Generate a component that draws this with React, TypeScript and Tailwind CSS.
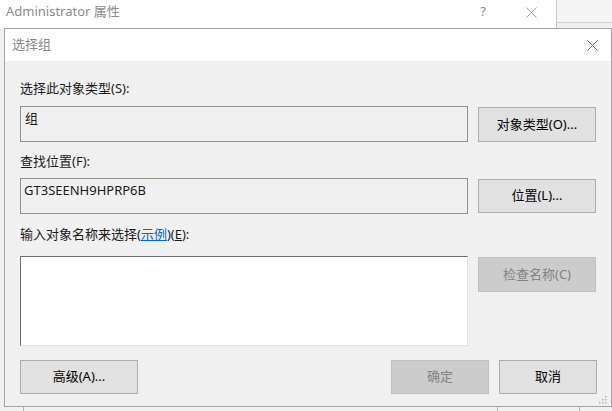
import React from "react";

const font = {
  fontFamily: '"Noto Sans", "Noto Sans CJK SC", sans-serif',
};

const CloseIcon = ({ color = "#333" }: { color?: string }) => (
  <svg width="11" height="11" viewBox="0 0 11 11">
    <path d="M0.5 0.5 L10.5 10.5 M10.5 0.5 L0.5 10.5" stroke={color} strokeWidth="1" fill="none" />
  </svg>
);

const Button = ({
  children,
  disabled,
  className = "",
}: {
  children: React.ReactNode;
  disabled?: boolean;
  className?: string;
}) => (
  <div
    className={
      "flex items-center justify-center border text-[13px] " +
      (disabled
        ? "bg-[#cccccc] border-[#bfbfbf] text-[#838383] "
        : "bg-[#e1e1e1] border-[#adadad] text-[#000000] ") +
      className
    }
  >
    {children}
  </div>
);

const Grip = () => (
  <svg width="10" height="10" viewBox="0 0 10 10" className="absolute right-[4px] bottom-[2px]">
    {[
      [8, 2],
      [5, 5],
      [8, 5],
      [2, 8],
      [5, 8],
      [8, 8],
    ].map(([x, y]) => (
      <rect key={`${x}-${y}`} x={x} y={y} width="1.5" height="1.5" fill="#b0b0b0" />
    ))}
  </svg>
);

export default function App() {
  return (
    <div className="relative w-[612px] h-[411px] overflow-hidden bg-[#f0f0f0]" style={font}>
      {/* window behind */}
      <div className="absolute left-0 top-0 w-[557px] h-[29px] bg-white border-r border-[#c8c8c8] flex items-start pt-[2px]">
        <span className="pl-[6px] text-[13px] leading-[18px] text-[#8c8c8c] flex-1">Administrator 属性</span>
        <span className="text-[13px] leading-[18px] text-[#8c8c8c] mr-[40px]">?</span>
        <span className="mr-[19px] mt-[5px] flex">
          <CloseIcon color="#9a9a9a" />
        </span>
      </div>
      <div className="absolute left-[557px] top-0 right-0 h-[23px] bg-[#f4f4f4] border-b border-[#cfcfcf]" />
      <div className="absolute left-[23px] bottom-0 w-px h-[5px] bg-[#b5b5b5]" />
      <div className="absolute left-[497px] bottom-0 w-px h-[5px] bg-[#b5b5b5]" />
      <div className="absolute left-[579px] bottom-0 w-px h-[5px] bg-[#b5b5b5]" />

      {/* dialog */}
      <div className="absolute left-[4px] top-[28px] w-[608px] h-[379px] border border-[#a3a3a3] bg-[#f0f0f0] flex flex-col">
        <div className="h-[32px] bg-white flex items-center shrink-0">
          <span className="pl-[7px] text-[13px] text-[#8a8a8a] flex-1">选择组</span>
          <span className="mr-[13px] flex">
            <CloseIcon color="#6a6a6a" />
          </span>
        </div>

        <div className="flex flex-col pl-[15px] pr-[14px] text-[13px] text-[#1a1a1a]">
          <div className="mt-[19px] leading-[16px]">选择此对象类型(S):</div>
          <div className="mt-[10px] flex gap-[10px]">
            <div className="w-[448px] h-[36px] border border-[#8f8f8f] bg-[#f0f0f0] px-[4px] pt-[2px] leading-[18px]">
              组
            </div>
            <Button className="w-[118px] h-[35px] mt-[1px]">对象类型(O)...</Button>
          </div>

          <div className="mt-[11px] leading-[16px]">查找位置(F):</div>
          <div className="mt-[9px] flex gap-[10px]">
            <div className="w-[448px] h-[36px] border border-[#8f8f8f] bg-[#f0f0f0] px-[3px] pt-[2px] leading-[18px]">
              GT3SEENH9HPRP6B
            </div>
            <Button className="w-[118px] h-[34px] mt-[1px]">位置(L)...</Button>
          </div>

          <div className="mt-[12px] leading-[16px]">
            输入对象名称来选择(
            <span className="text-[#0066cc] underline">示例</span>)(<span className="underline">E</span>):
          </div>
          <div className="mt-[14px] flex gap-[10px]">
            <div className="w-[448px] h-[90px] bg-white border border-t-[#6e6e6e] border-l-[#6e6e6e] border-r-[#e3e3e3] border-b-[#e3e3e3]" />
            <Button disabled className="w-[118px] h-[35px] mt-[1px]">
              检查名称(C)
            </Button>
          </div>

          <div className="mt-[14px] flex gap-[10px]">
            <Button className="w-[118px] h-[34px]">高级(A)...</Button>
            <div className="flex-1" />
            <Button disabled className="w-[98px] h-[34px]">
              确定
            </Button>
            <Button className="w-[98px] h-[34px]">取消</Button>
          </div>
        </div>
        <Grip />
      </div>
    </div>
  );
}
